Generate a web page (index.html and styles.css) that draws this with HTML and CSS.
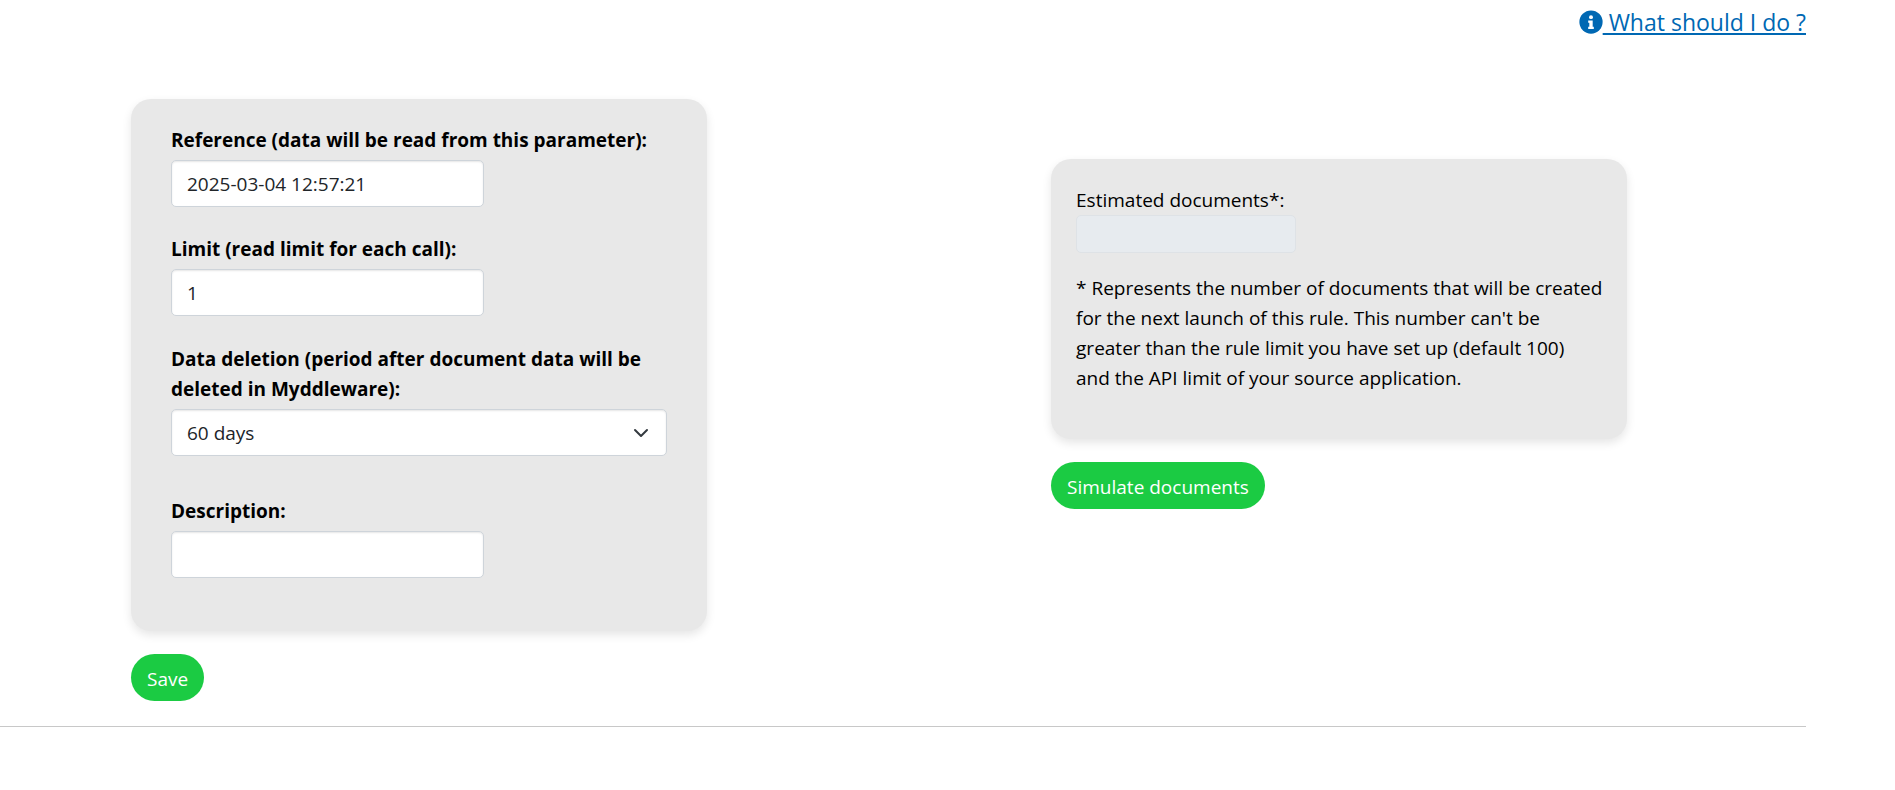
FILE: index.html
```html
<!DOCTYPE html>
<html lang="en">
<head>
<meta charset="utf-8">
<title>Rule parameters</title>
<link rel="stylesheet" href="styles.css">
</head>
<body>
<main class="page">
  <div class="help">
    <a class="help-link" href="#"><svg class="help-icon" viewBox="0 0 512 512" aria-hidden="true"><circle cx="256" cy="256" r="248" fill="currentColor"/><circle cx="256" cy="152" r="42" fill="#fff"/><path fill="#fff" d="M196 224h96v132h24v48H196v-48h24v-84h-24z"/></svg><span class="help-text">&nbsp;What should I do ?</span></a>
  </div>
  <div class="panels">
    <form class="panel">
      <div class="card card-form">
        <div class="field">
          <label for="reference">Reference (data will be read from this parameter):</label>
          <input class="control" id="reference" type="text" value="2025-03-04 12:57:21">
        </div>
        <div class="field">
          <label for="limit">Limit (read limit for each call):</label>
          <input class="control" id="limit" type="text" value="1">
        </div>
        <div class="field field-select">
          <label for="deletion">Data deletion (period after document data will be deleted in Myddleware):</label>
          <div class="select-wrap">
            <select class="control control-select" id="deletion"><option>60 days</option></select>
            <svg class="chevron" viewBox="0 0 16 16" aria-hidden="true"><path d="m2 5 6 6 6-6" fill="none" stroke="#343a40" stroke-width="2" stroke-linecap="round" stroke-linejoin="round"/></svg>
          </div>
        </div>
        <div class="field">
          <label for="description">Description:</label>
          <input class="control" id="description" type="text">
        </div>
      </div>
      <button class="button" type="button">Save</button>
    </form>
    <section class="panel panel-estimate">
      <div class="card card-estimate">
        <label for="estimate">Estimated documents*:</label>
        <input class="estimate" id="estimate" type="text" disabled>
        <p class="note">* Represents the number of documents that will be created for the next launch of this rule. This number can't be greater than the rule limit you have set up (default 100) and&nbsp;the API limit of your source application.</p>
      </div>
      <button class="button" type="button">Simulate documents</button>
    </section>
  </div>
  <hr class="divider">
</main>
</body>
</html>
```
FILE: styles.css
```css
* {
  box-sizing: border-box;
}

body {
  margin: 0;
  background: #fff;
  color: #000;
  font: 19px/30px "Open Sans", "Noto Sans", sans-serif;
}

.page {
  margin-right: 89px;
}

.help {
  display: flex;
  justify-content: flex-end;
  padding-top: 4px;
}

.help-link {
  display: flex;
  align-items: center;
  color: #0068b3;
  font-size: 23px;
  line-height: 36px;
  text-decoration: none;
}

.help-text {
  text-decoration: underline;
  text-decoration-thickness: 2px;
  text-underline-offset: 2px;
}

.help-icon {
  width: 24px;
  height: 24px;
}

.panels {
  display: flex;
  justify-content: space-between;
  align-items: flex-start;
  padding: 59px 179px 25px 131px;
}

.panel {
  width: 38.5%;
}

.panel-estimate {
  margin-top: 60px;
}

.card {
  margin-bottom: 23px;
  border-radius: 20px;
  background: #e8e8e8;
  box-shadow: 0 4px 10px rgba(0, 0, 0, 0.1);
}

.card-form {
  display: flex;
  flex-direction: column;
  gap: 27px;
  padding: 26px 40px 53px;
}

.card-form label {
  font-weight: 700;
}

.card-estimate {
  padding: 26px 20px 46px 25px;
}

.field {
  display: flex;
  flex-direction: column;
  align-items: flex-start;
  gap: 5px;
}

.field-select {
  padding: 1px 0 13px;
}

.control {
  width: 313px;
  max-width: 100%;
  height: 47px;
  padding: 0 15px;
  border: 1px solid #ced4da;
  border-radius: 5px;
  background: #fff;
  box-shadow: inset 0 1px 2px rgba(0, 0, 0, 0.1);
  color: #212529;
  font: inherit;
}

.select-wrap {
  position: relative;
  width: 100%;
}

.control-select {
  display: block;
  width: 100%;
  appearance: none;
}

.chevron {
  position: absolute;
  top: 16px;
  right: 18px;
  width: 16px;
  height: 16px;
  pointer-events: none;
}

.estimate {
  display: block;
  width: 220px;
  height: 38px;
  border: 1px solid #dee2e6;
  border-radius: 5px;
  background: #e7ebef;
  font: inherit;
}

.note {
  margin: 20px 0 0;
}

.button {
  display: block;
  height: 47px;
  padding: 2px 16px 0;
  border: 0;
  border-radius: 24px;
  background: #1bcb43;
  color: #fff;
  font: inherit;
}

.divider {
  height: 1px;
  margin: 0;
  border: 0;
  background: #c8c8c8;
}
```
